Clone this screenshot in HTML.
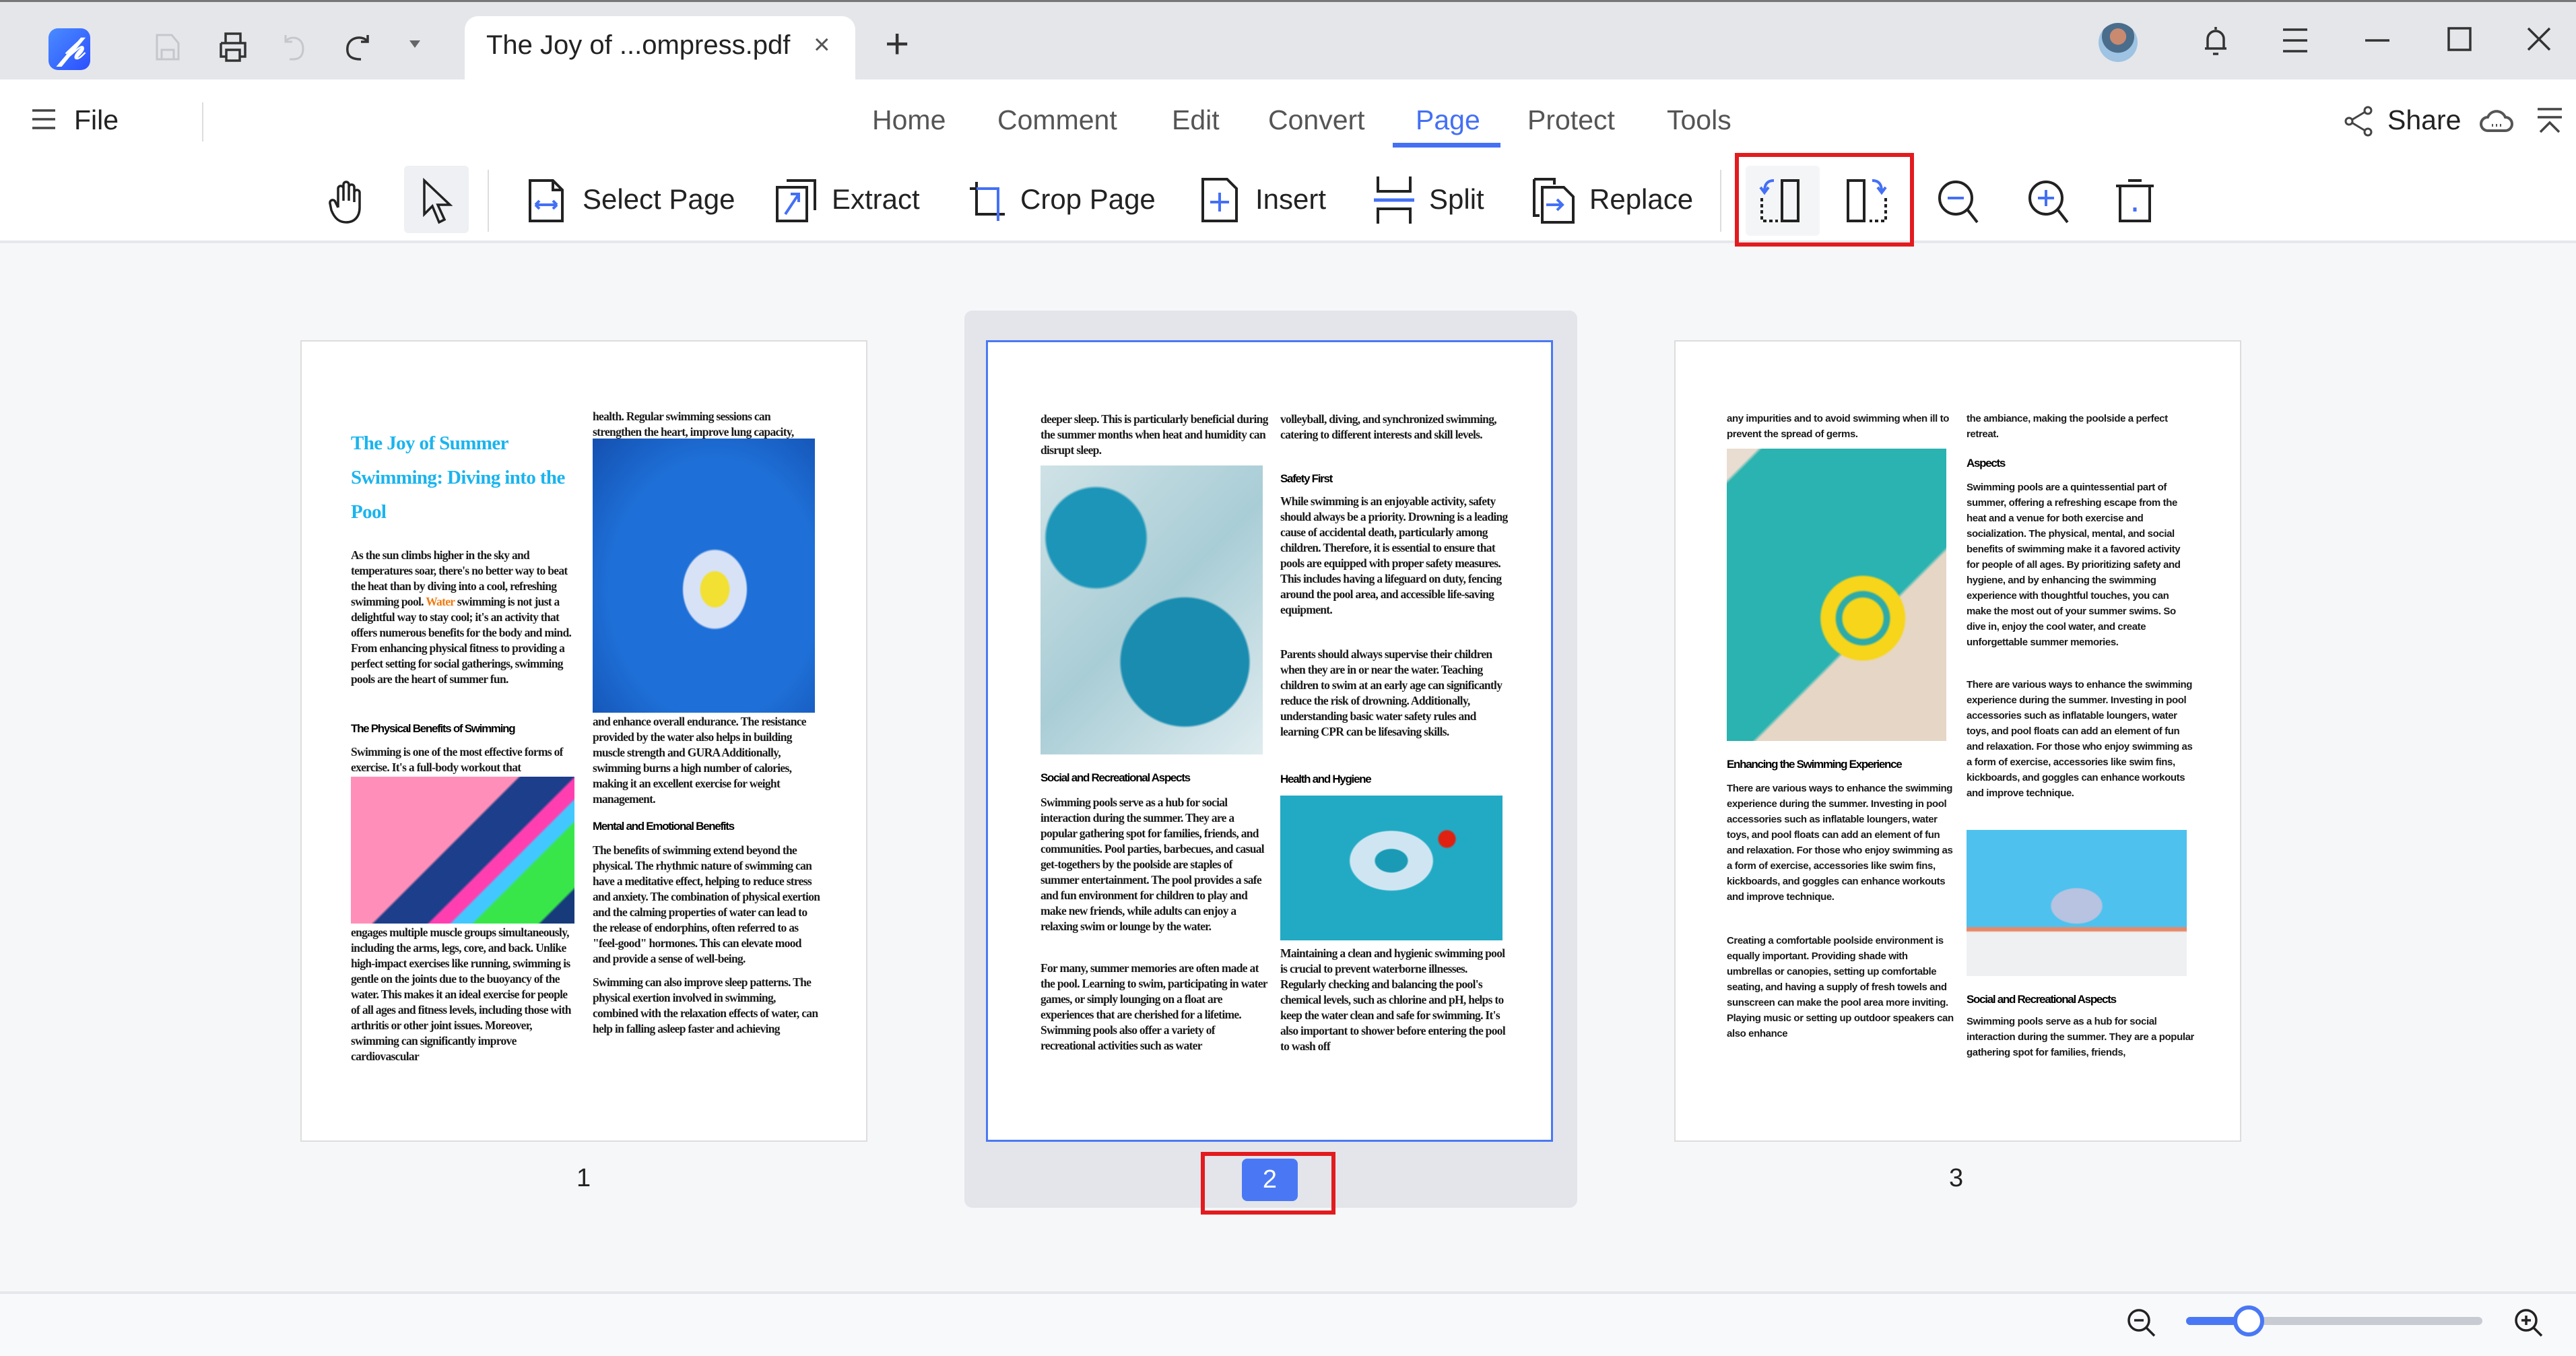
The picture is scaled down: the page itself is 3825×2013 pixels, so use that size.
<!DOCTYPE html>
<html><head><meta charset="utf-8"><style>
*{margin:0;padding:0;box-sizing:border-box}
body{width:3825px;height:2013px;overflow:hidden;background:#f6f7f9;font-family:"Liberation Sans",sans-serif;position:relative;color:#222}
.a{position:absolute}
.tb{left:0;top:0;width:3825px;height:118px;background:#e5e6ea;border-top:3px solid #777}
.menu{left:0;top:118px;width:3825px;height:243px;background:#fff;border-bottom:4px solid #e6e7ea}
.nav{top:155px;font-size:41px;color:#555}
.tool{top:272px;font-size:42px;color:#222}
.pg{background:#fff;border:2px solid #ddd;width:842px;height:1190px;overflow:hidden}
.t{position:absolute;font-family:"Liberation Serif",serif;font-weight:bold;font-size:17.5px;line-height:23px;letter-spacing:-0.7px;width:338px;overflow:hidden;color:#1a1a1a}
.s{font-family:"Liberation Sans",sans-serif;letter-spacing:-0.4px;font-size:15px}
.h{position:absolute;font-family:"Liberation Sans",sans-serif;font-weight:bold;font-size:17px;letter-spacing:-1.3px;color:#000}
.im{position:absolute}
svg{position:absolute;overflow:visible}
</style></head><body>
<div class="a tb"></div>
<div class="a" style="left:72px;top:42px;width:62px;height:62px;border-radius:14px;background:linear-gradient(135deg,#4a8cff,#2b4fff)"></div>
<div class="a" style="left:88px;top:40px;color:#fff;font-size:52px;font-style:italic;font-weight:bold">𝓅</div>
<svg style="left:230px;top:50px" width="40" height="40" fill="none" stroke="#c5c7cc" stroke-width="3"><path d="M3 2h22l10 12v24H3z M10 24h18v14H10z"/></svg>
<svg style="left:325px;top:48px" width="44" height="44" fill="none" stroke="#333" stroke-width="3.5"><path d="M10 2h22v14H10z M3 16h36v20H31 M11 36H3V16 M11 26h20v16H11z"/></svg>
<svg style="left:418px;top:50px" width="40" height="40" fill="none" stroke="#c5c7cc" stroke-width="3"><path d="M6 2v10h10 M6 12c6-10 26-8 26 10s-14 16-20 16"/></svg>
<svg style="left:510px;top:50px" width="40" height="40" fill="none" stroke="#333" stroke-width="3.5"><path d="M36 2v10H26 M36 12C30 2 8 4 6 20s10 18 20 18"/></svg>
<div class="a" style="left:608px;top:60px;border:8px solid transparent;border-top:11px solid #666"></div>
<div class="a" style="left:690px;top:24px;width:580px;height:94px;background:#fff;border-radius:20px 20px 0 0"></div>
<div class="a" style="left:722px;top:45px;font-size:40px;color:#222">The Joy of ...ompress.pdf</div>
<div class="a" style="left:1208px;top:42px;font-size:42px;color:#555">×</div>
<div class="a" style="left:1314px;top:30px;font-size:62px;color:#333;font-weight:300">+</div>
<div class="a" style="left:3116px;top:34px;width:58px;height:58px;border-radius:50%;background:radial-gradient(circle at 50% 35%,#c98a70 0 25%,#4a6d8c 26% 50%,#9ec3e3 51%)"></div>
<svg style="left:3272px;top:38px" width="36" height="46" fill="none" stroke="#333" stroke-width="3.5"><path d="M18 2v4 M6 34V20a12 12 0 0124 0v14z M2 34h32 M14 42h8"/></svg>
<svg style="left:3388px;top:42px" width="40" height="36" stroke="#333" stroke-width="3.5"><path d="M2 2h36M2 18h36M2 34h36"/></svg>
<svg style="left:3512px;top:58px" width="36" height="4" stroke="#333" stroke-width="3.5"><path d="M0 2h36"/></svg>
<svg style="left:3634px;top:40px" width="36" height="36" fill="none" stroke="#333" stroke-width="3.5"><rect x="2" y="2" width="32" height="32"/></svg>
<svg style="left:3752px;top:40px" width="36" height="36" stroke="#333" stroke-width="3.5"><path d="M2 2l32 32M34 2L2 34"/></svg>

<div class="a menu"></div>
<svg style="left:48px;top:162px" width="34" height="30" stroke="#444" stroke-width="3.5"><path d="M0 2h34M0 15h34M0 28h34"/></svg>
<div class="a" style="left:110px;top:155px;font-size:41px;color:#222">File</div>
<div class="a" style="left:300px;top:152px;width:2px;height:58px;background:#ddd"></div>
<div class="a nav" style="left:1295px">Home</div>
<div class="a nav" style="left:1481px">Comment</div>
<div class="a nav" style="left:1740px">Edit</div>
<div class="a nav" style="left:1883px">Convert</div>
<div class="a nav" style="left:2102px;color:#4470f5">Page</div>
<div class="a" style="left:2068px;top:212px;width:160px;height:7px;background:#4470f5"></div>
<div class="a nav" style="left:2268px">Protect</div>
<div class="a nav" style="left:2475px">Tools</div>
<svg style="left:3480px;top:158px" width="44" height="44" fill="none" stroke="#444" stroke-width="3"><circle cx="36" cy="6" r="5"/><circle cx="8" cy="22" r="5"/><circle cx="36" cy="38" r="5"/><path d="M12 20l20-12M12 24l20 12"/></svg>
<div class="a" style="left:3545px;top:155px;font-size:41px;color:#222">Share</div>
<svg style="left:3682px;top:158px" width="50" height="40" fill="none" stroke="#555" stroke-width="4"><path d="M12 36a10 10 0 010-20 14 14 0 0126 0 10 10 0 010 20z"/><path d="M18 28h2M24 28h2M30 28h2"/></svg>
<svg style="left:3768px;top:160px" width="36" height="40" fill="none" stroke="#444" stroke-width="3.5"><path d="M0 2h36M0 14h36M4 36l14-14 14 14"/></svg>

<svg style="left:488px;top:268px" width="56" height="64" fill="none" stroke="#222" stroke-width="3.5"><path d="M14 40V12a4 4 0 018 0v18V6a4 4 0 018 0v24V10a4 4 0 018 0v22V18a4 4 0 018 0v22c0 14-8 22-20 22S8 54 4 44l-2-10a4 4 0 018-2l4 8"/></svg>
<div class="a" style="left:600px;top:246px;width:96px;height:100px;background:#eef0f3;border-radius:6px"></div>
<svg style="left:626px;top:266px" width="48" height="68" fill="none" stroke="#222" stroke-width="3.5"><path d="M4 2v50l12-12 10 24 8-4-10-22h18z"/></svg>
<div class="a" style="left:724px;top:252px;width:2px;height:92px;background:#ddd"></div>
<svg style="left:785px;top:266px" width="56" height="64" fill="none" stroke="#222" stroke-width="4"><path d="M2 2h34l14 14v46H2z M36 2v14h14"/><path d="M10 38h32M10 38l6-6M10 38l6 6M42 38l-6-6M42 38l-6 6" stroke="#4470f5"/></svg>
<div class="a tool" style="left:865px">Select Page</div>
<svg style="left:1152px;top:266px" width="60" height="64" fill="none" stroke="#222" stroke-width="4"><path d="M16 2h42v44 M2 12h44v50H2z"/><path d="M14 52L34 22M22 22h12v12" stroke="#4470f5"/></svg>
<div class="a tool" style="left:1235px">Extract</div>
<svg style="left:1438px;top:268px" width="56" height="62" fill="none" stroke="#222" stroke-width="4"><path d="M12 2v48h42 M2 12h8"/><path d="M12 12h32v48" stroke="#4470f5"/></svg>
<div class="a tool" style="left:1515px">Crop Page</div>
<svg style="left:1784px;top:264px" width="56" height="66" fill="none" stroke="#222" stroke-width="4"><path d="M2 2h36l14 14v48H2z"/><path d="M27 22v28M13 36h28" stroke="#4470f5"/></svg>
<div class="a tool" style="left:1864px">Insert</div>
<svg style="left:2040px;top:262px" width="60" height="70" fill="none" stroke="#222" stroke-width="4"><path d="M6 0v22h48V0 M6 70V48h48v22"/><path d="M0 35h60" stroke="#4470f5" stroke-width="5"/></svg>
<div class="a tool" style="left:2122px">Split</div>
<svg style="left:2276px;top:264px" width="62" height="68" fill="none" stroke="#222" stroke-width="4"><path d="M2 2h30v8 M2 2v54h8 M14 14h32l14 14v38H14z"/><path d="M20 40h24M36 32l8 8-8 8" stroke="#4470f5"/></svg>
<div class="a tool" style="left:2360px">Replace</div>
<div class="a" style="left:2554px;top:252px;width:2px;height:92px;background:#ddd"></div>
<div class="a" style="left:2576px;top:227px;width:266px;height:139px;border:6px solid #e21b1f"></div>
<div class="a" style="left:2592px;top:246px;width:110px;height:104px;background:#f4f5f7;border-radius:6px"></div>
<svg style="left:2614px;top:264px" width="64" height="68" fill="none" stroke="#222" stroke-width="4"><path d="M32 4h24v60H32z"/><path d="M2 30v34h24M2 38h0" stroke-dasharray="5 4"/><path d="M20 4c-10 0-14 6-14 16M0 14l6 8 6-8" stroke="#4470f5"/></svg>
<svg style="left:2740px;top:264px" width="64" height="68" fill="none" stroke="#222" stroke-width="4"><path d="M4 4h24v60H4z"/><path d="M60 30v34H36" stroke-dasharray="5 4"/><path d="M40 4c10 0 14 6 14 16M48 14l6 8 6-8" stroke="#4470f5"/></svg>
<svg style="left:2876px;top:266px" width="64" height="68" fill="none" stroke="#222" stroke-width="4"><circle cx="28" cy="28" r="24"/><path d="M46 46l14 18"/><path d="M16 28h24" stroke="#4470f5"/></svg>
<svg style="left:3010px;top:266px" width="64" height="68" fill="none" stroke="#222" stroke-width="4"><circle cx="28" cy="28" r="24"/><path d="M46 46l14 18"/><path d="M16 28h24M28 16v24" stroke="#4470f5"/></svg>
<svg style="left:3140px;top:264px" width="60" height="68" fill="none" stroke="#222" stroke-width="4"><path d="M20 4h20M2 12h56M8 12v52h44V12"/><path d="M30 44v6" stroke="#4470f5" stroke-width="5"/></svg>

<!-- page 1 -->
<div class="a pg" style="left:446px;top:505px">
 <div class="a" style="left:73px;top:126px;font-family:'Liberation Serif',serif;font-weight:bold;font-size:29px;line-height:51px;color:#1ab4ee;letter-spacing:-0.6px;width:345px">The Joy of Summer Swimming: Diving into the Pool</div>
 <div class="t" style="left:73px;top:306px;height:236px">As the sun climbs higher in the sky and temperatures soar, there's no better way to beat the heat than by diving into a cool, refreshing swimming pool. <span style="color:#f07a10">Water</span> swimming is not just a delightful way to stay cool; it's an activity that offers numerous benefits for the body and mind. From enhancing physical fitness to providing a perfect setting for social gatherings, swimming pools are the heart of summer fun.</div>
 <div class="h" style="left:73px;top:565px">The Physical Benefits of Swimming</div>
 <div class="t" style="left:73px;top:598px;height:46px">Swimming is one of the most effective forms of exercise. It's a full-body workout that</div>
 <div class="im" style="left:73px;top:646px;width:332px;height:218px;background:linear-gradient(135deg,#ff8fb8 0 45%,#1d3e8a 46% 60%,#ff3fb0 61% 66%,#42c8ff 67% 72%,#39e64a 73% 90%,#163a7a 91%)"></div>
 <div class="t" style="left:73px;top:866px;height:210px">engages multiple muscle groups simultaneously, including the arms, legs, core, and back. Unlike high-impact exercises like running, swimming is gentle on the joints due to the buoyancy of the water. This makes it an ideal exercise for people of all ages and fitness levels, including those with arthritis or other joint issues. Moreover, swimming can significantly improve cardiovascular</div>
 <div class="t" style="left:432px;top:100px;height:46px">health. Regular swimming sessions can strengthen the heart, improve lung capacity,</div>
 <div class="im" style="left:432px;top:144px;width:330px;height:407px;background:radial-gradient(ellipse at 55% 55%,#f2e033 0 8%,#d8e2f6 9% 18%,#1e70d8 19% 60%,#1450b0)"></div>
 <div class="t" style="left:432px;top:553px;height:140px">and enhance overall endurance. The resistance provided by the water also helps in building muscle strength and GURA Additionally, swimming burns a high number of calories, making it an excellent exercise for weight management.</div>
 <div class="h" style="left:432px;top:710px">Mental and Emotional Benefits</div>
 <div class="t" style="left:432px;top:744px;height:186px">The benefits of swimming extend beyond the physical. The rhythmic nature of swimming can have a meditative effect, helping to reduce stress and anxiety. The combination of physical exertion and the calming properties of water can lead to the release of endorphins, often referred to as "feel-good" hormones. This can elevate mood and provide a sense of well-being.</div>
 <div class="t" style="left:432px;top:940px;height:116px">Swimming can also improve sleep patterns. The physical exertion involved in swimming, combined with the relaxation effects of water, can help in falling asleep faster and achieving</div>
</div>
<div class="a" style="left:856px;top:1728px;font-size:38px">1</div>

<!-- page 2 -->
<div class="a" style="left:1432px;top:461px;width:910px;height:1332px;background:#e4e5ea;border-radius:12px"></div>
<div class="a pg" style="left:1464px;top:505px;border:3px solid #4a78f5">
 <div class="t" style="left:78px;top:103px;height:70px">deeper sleep. This is particularly beneficial during the summer months when heat and humidity can disrupt sleep.</div>
 <div class="im" style="left:78px;top:183px;width:330px;height:429px;background:radial-gradient(circle at 25% 25%,#1c95b8 0 18%,transparent 19%),radial-gradient(circle at 65% 68%,#1a8cb0 0 26%,transparent 27%),linear-gradient(135deg,#cfe2e6,#a9cdd6,#dfecef)"></div>
 <div class="h" style="left:78px;top:637px">Social and Recreational Aspects</div>
 <div class="t" style="left:78px;top:672px;height:230px">Swimming pools serve as a hub for social interaction during the summer. They are a popular gathering spot for families, friends, and communities. Pool parties, barbecues, and casual get-togethers by the poolside are staples of summer entertainment. The pool provides a safe and fun environment for children to play and make new friends, while adults can enjoy a relaxing swim or lounge by the water.</div>
 <div class="t" style="left:78px;top:918px;height:140px">For many, summer memories are often made at the pool. Learning to swim, participating in water games, or simply lounging on a float are experiences that are cherished for a lifetime. Swimming pools also offer a variety of recreational activities such as water</div>
 <div class="t" style="left:434px;top:103px;height:70px">volleyball, diving, and synchronized swimming, catering to different interests and skill levels.</div>
 <div class="h" style="left:434px;top:193px">Safety First</div>
 <div class="t" style="left:434px;top:225px;height:208px">While swimming is an enjoyable activity, safety should always be a priority. Drowning is a leading cause of accidental death, particularly among children. Therefore, it is essential to ensure that pools are equipped with proper safety measures. This includes having a lifeguard on duty, fencing around the pool area, and accessible life-saving equipment.</div>
 <div class="t" style="left:434px;top:452px;height:162px">Parents should always supervise their children when they are in or near the water. Teaching children to swim at an early age can significantly reduce the risk of drowning. Additionally, understanding basic water safety rules and learning CPR can be lifesaving skills.</div>
 <div class="h" style="left:434px;top:639px">Health and Hygiene</div>
 <div class="im" style="left:434px;top:673px;width:330px;height:215px;background:radial-gradient(circle at 75% 30%,#e02010 0 4%,transparent 5%),radial-gradient(ellipse at 50% 45%,#1a9ab5 0 10%,#cfe6f2 11% 26%,transparent 27%),#22aac4"></div>
 <div class="t" style="left:434px;top:896px;height:162px">Maintaining a clean and hygienic swimming pool is crucial to prevent waterborne illnesses. Regularly checking and balancing the pool's chemical levels, such as chlorine and pH, helps to keep the water clean and safe for swimming. It's also important to shower before entering the pool to wash off</div>
</div>
<div class="a" style="left:1783px;top:1710px;width:200px;height:93px;border:6px solid #e21b1f"></div>
<div class="a" style="left:1844px;top:1720px;width:83px;height:63px;background:#4a78f5;border-radius:8px;color:#fff;font-size:38px;text-align:center;line-height:63px">2</div>

<!-- page 3 -->
<div class="a pg" style="left:2486px;top:505px">
 <div class="t s" style="left:76px;top:103px;height:46px">any impurities and to avoid swimming when ill to prevent the spread of germs.</div>
 <div class="im" style="left:76px;top:159px;width:326px;height:434px;background:radial-gradient(circle at 62% 58%,#f6d51a 0 9%,#2eaaa8 10% 12%,#f6d51a 13% 19%,transparent 20%),linear-gradient(135deg,#e8ddd0 0 6%,#2ab3b0 7% 62%,#e6d6c6 63%)"></div>
 <div class="h" style="left:76px;top:618px">Enhancing the Swimming Experience</div>
 <div class="t s" style="left:76px;top:652px;height:186px">There are various ways to enhance the swimming experience during the summer. Investing in pool accessories such as inflatable loungers, water toys, and pool floats can add an element of fun and relaxation. For those who enjoy swimming as a form of exercise, accessories like swim fins, kickboards, and goggles can enhance workouts and improve technique.</div>
 <div class="t s" style="left:76px;top:878px;height:162px">Creating a comfortable poolside environment is equally important. Providing shade with umbrellas or canopies, setting up comfortable seating, and having a supply of fresh towels and sunscreen can make the pool area more inviting. Playing music or setting up outdoor speakers can also enhance</div>
 <div class="t s" style="left:432px;top:103px;height:46px">the ambiance, making the poolside a perfect retreat.</div>
 <div class="h" style="left:432px;top:171px">Aspects</div>
 <div class="t s" style="left:432px;top:205px;height:280px">Swimming pools are a quintessential part of summer, offering a refreshing escape from the heat and a venue for both exercise and socialization. The physical, mental, and social benefits of swimming make it a favored activity for people of all ages. By prioritizing safety and hygiene, and by enhancing the swimming experience with thoughtful touches, you can make the most out of your summer swims. So dive in, enjoy the cool water, and create unforgettable summer memories.</div>
 <div class="t s" style="left:432px;top:498px;height:210px">There are various ways to enhance the swimming experience during the summer. Investing in pool accessories such as inflatable loungers, water toys, and pool floats can add an element of fun and relaxation. For those who enjoy swimming as a form of exercise, accessories like swim fins, kickboards, and goggles can enhance workouts and improve technique.</div>
 <div class="im" style="left:432px;top:725px;width:327px;height:217px;background:radial-gradient(ellipse at 50% 52%,#b7c3e0 0 16%,transparent 17%),linear-gradient(180deg,#4fc1ee 0 66%,#e58a6a 67% 69%,#eef0f2 70%)"></div>
 <div class="h" style="left:432px;top:967px">Social and Recreational Aspects</div>
 <div class="t s" style="left:432px;top:998px;height:70px">Swimming pools serve as a hub for social interaction during the summer. They are a popular gathering spot for families, friends,</div>
</div>
<div class="a" style="left:2894px;top:1728px;font-size:38px">3</div>

<div class="a" style="left:0;top:1917px;width:3825px;height:4px;background:#e6e7ea"></div>
<div class="a" style="left:0;top:1921px;width:3825px;height:92px;background:#f8f9fb"></div>
<svg style="left:3158px;top:1942px" width="44" height="44" fill="none" stroke="#222" stroke-width="3.5"><circle cx="18" cy="18" r="15"/><path d="M29 29l12 12M11 18h14"/></svg>
<div class="a" style="left:3246px;top:1955px;width:440px;height:12px;background:#c8ccd2;border-radius:6px"></div>
<div class="a" style="left:3246px;top:1955px;width:90px;height:12px;background:#4a78f5;border-radius:6px"></div>
<div class="a" style="left:3316px;top:1938px;width:46px;height:46px;border-radius:50%;background:#fff;border:6px solid #4a78f5"></div>
<svg style="left:3733px;top:1942px" width="44" height="44" fill="none" stroke="#222" stroke-width="3.5"><circle cx="18" cy="18" r="15"/><path d="M29 29l12 12M11 18h14M18 11v14"/></svg>
</body></html>
